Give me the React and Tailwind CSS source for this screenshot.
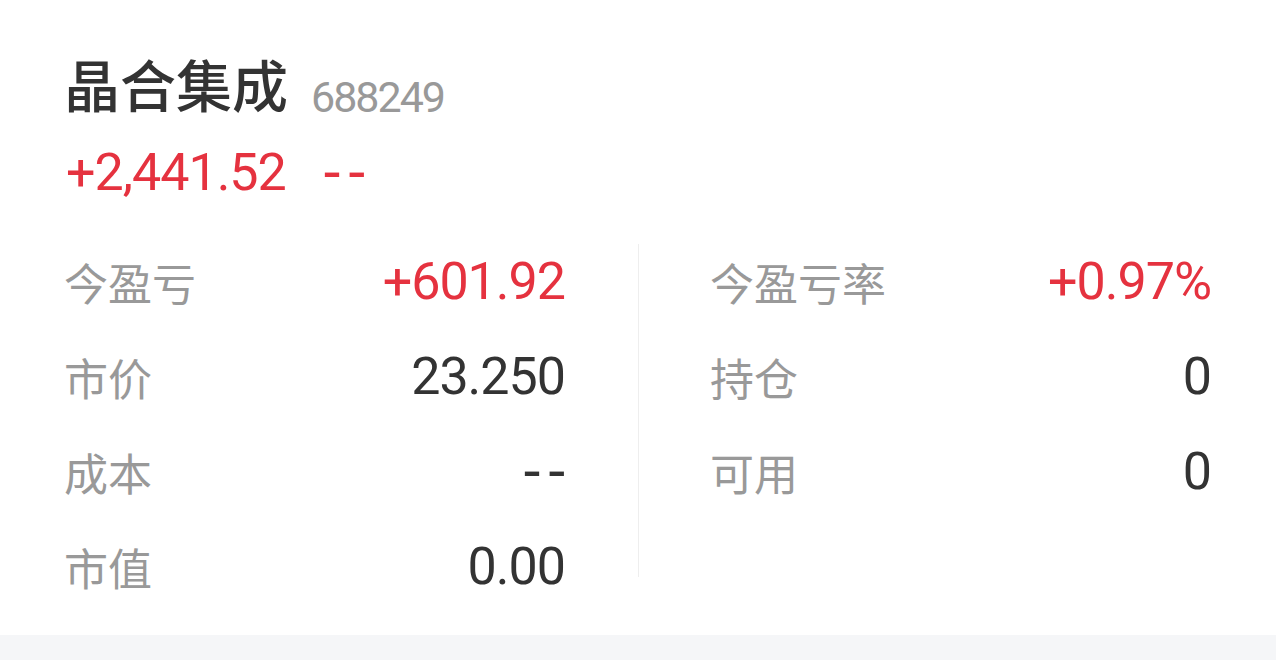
const num = 'font-["Roboto","Noto_Sans",sans-serif]';
const cjk = 'font-["Noto_Sans_CJK_SC",sans-serif]';

const left = [
  { label: '今盈亏', value: '+601.92', red: true },
  { label: '市价', value: '23.250' },
  { label: '成本', value: '--' },
  { label: '市值', value: '0.00' },
];

const right = [
  { label: '今盈亏率', value: '+0.97%', red: true },
  { label: '持仓', value: '0' },
  { label: '可用', value: '0' },
];

const Row = ({ label, value, red }) => {
  const dash = value === '--';
  return (
    <div className="flex h-[95px] items-center justify-between">
      <span className={`${cjk} text-[44px] leading-[56px] text-[#999999]`}>{label}</span>
      <span
        className={`${num} leading-[56px] ${
          dash ? '-mr-[8px] text-[60px] tracking-[8px]' : 'text-[52px] tracking-[-1px]'
        } ${red ? 'text-[#e5323f]' : 'text-[#333333]'}`}
      >
        {value}
      </span>
    </div>
  );
};

export default function App() {
  return (
    <div className="flex h-[660px] w-[1276px] flex-col bg-white">
      <div className="flex-1 pl-[64px] pt-[55px]">
        <div className="flex h-[56px] items-end">
          <h1 className={`${cjk} text-[56px] font-medium leading-[56px] text-[#333333]`}>晶合集成</h1>
          <span className={`${num} ml-[23px] text-[43px] leading-[28px] tracking-[-2px] text-[#999999]`}>
            688249
          </span>
        </div>
        <div className={`${num} mt-[34px] flex h-[56px] items-center leading-[56px] text-[#e5323f]`}>
          <span className="ml-[2px] text-[52px] tracking-[-1px]">+2,441.52</span>
          <span className="ml-[38px] text-[60px] tracking-[8px]">--</span>
        </div>
        <div className="mt-[33px] flex">
          <div className="w-[501px]">
            {left.map((r) => (
              <Row key={r.label} {...r} />
            ))}
          </div>
          <div className="ml-[73px] mt-[10px] h-[333px] w-px bg-[#eeeeee]" />
          <div className="ml-[71px] w-[501px]">
            {right.map((r) => (
              <Row key={r.label} {...r} />
            ))}
          </div>
        </div>
      </div>
      <div className="h-[25px] bg-[#f5f6f8]" />
    </div>
  );
}
